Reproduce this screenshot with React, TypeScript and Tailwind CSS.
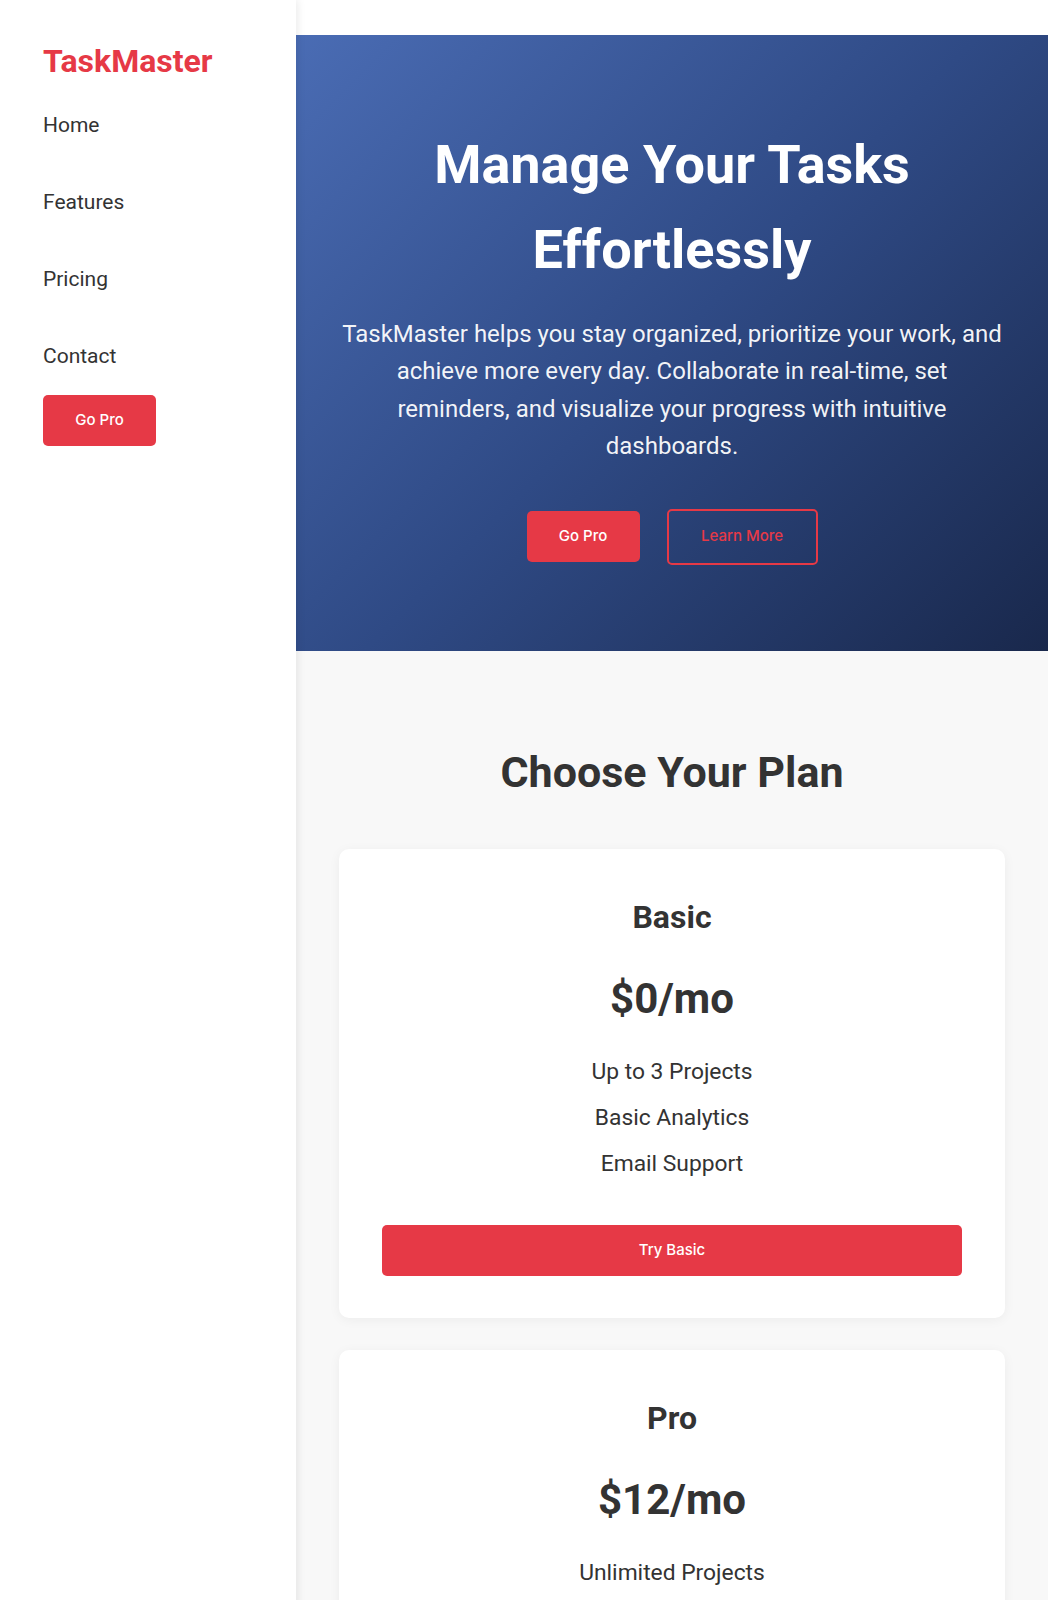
import React from "react";

const btnFont = { fontFamily: "Inter, 'Liberation Sans', sans-serif" };

function Card({
  name,
  price,
  features,
  cta,
}: {
  name: string;
  price: string;
  features: string[];
  cta: string;
}) {
  return (
    <div className="bg-white rounded-[10px] shadow-[0_2px_12px_rgba(0,0,0,0.05)] px-[43px] pt-[44px] pb-[42px] text-center">
      <h3 className="text-[32px] leading-[48px] font-bold text-[#333]">{name}</h3>
      <div className="mt-[33px] text-[42px] leading-[50px] font-bold text-[#333]">{price}</div>
      <ul className="mt-[25px]">
        {features.map((f) => (
          <li key={f} className="text-[22.8px] leading-[46px] text-[#333]">
            {f}
          </li>
        ))}
      </ul>
      <button
        style={btnFont}
        className="mt-[38px] w-full h-[51px] rounded-[5px] bg-[#e63946] text-white text-[15px] font-medium"
      >
        {cta}
      </button>
    </div>
  );
}

export default function App() {
  return (
    <div
      className="flex min-h-[1600px] w-full"
      style={{ fontFamily: "Roboto, 'Liberation Sans', sans-serif" }}
    >
      <aside className="relative z-10 w-[296px] shrink-0 bg-white shadow-[2px_0_8px_rgba(0,0,0,0.08)] pl-[43px] pt-10">
        <div className="text-[32px] leading-[42px] font-bold text-[#e63946]">TaskMaster</div>
        <nav className="mt-[5px] flex flex-col">
          {["Home", "Features", "Pricing", "Contact"].map((n) => (
            <a key={n} className="text-[21px] leading-[77px] text-[#333]">
              {n}
            </a>
          ))}
        </nav>
        <button
          style={btnFont}
          className="w-[113px] h-[51px] rounded-[5px] bg-[#e63946] text-white text-[15px] font-medium"
        >
          Go Pro
        </button>
      </aside>
      <main className="flex-1 bg-white pt-[35px] flex flex-col">
        <section className="bg-[linear-gradient(135deg,#4a6cb4_0%,#2f4a85_50%,#19284c_100%)] px-10 pt-[88px] pb-[86px] text-center text-white">
          <h1 className="text-[54px] leading-[84.5px] font-bold">
            Manage Your Tasks
            <br />
            Effortlessly
          </h1>
          <p className="mt-6 text-[24px] leading-[37.4px] text-white/95 max-w-[664px] mx-auto">
            TaskMaster helps you stay organized, prioritize your work, and achieve more every day.
            Collaborate in real-time, set reminders, and visualize your progress with intuitive
            dashboards.
          </p>
          <div className="mt-[43px] flex justify-center items-center gap-[27px]">
            <button
              style={btnFont}
              className="w-[113px] h-[51px] rounded-[5px] bg-[#e63946] text-white text-[15px] font-medium"
            >
              Go Pro
            </button>
            <button
              style={btnFont}
              className="w-[151px] h-[56px] rounded-[5px] border-2 border-[#e63946] text-[#e63946] text-[15px] font-medium"
            >
              Learn More
            </button>
          </div>
        </section>
        <section className="flex-1 bg-[#f8f8f8] px-[43px] pt-[95px] pb-16">
          <h2 className="text-center text-[43px] leading-[52px] font-bold text-[#333]">
            Choose Your Plan
          </h2>
          <div className="mt-[51px] flex flex-col gap-[32px]">
            <Card
              name="Basic"
              price="$0/mo"
              features={["Up to 3 Projects", "Basic Analytics", "Email Support"]}
              cta="Try Basic"
            />
            <Card
              name="Pro"
              price="$12/mo"
              features={["Unlimited Projects", "Advanced Analytics", "Priority Support"]}
              cta="Go Pro"
            />
          </div>
        </section>
      </main>
    </div>
  );
}
